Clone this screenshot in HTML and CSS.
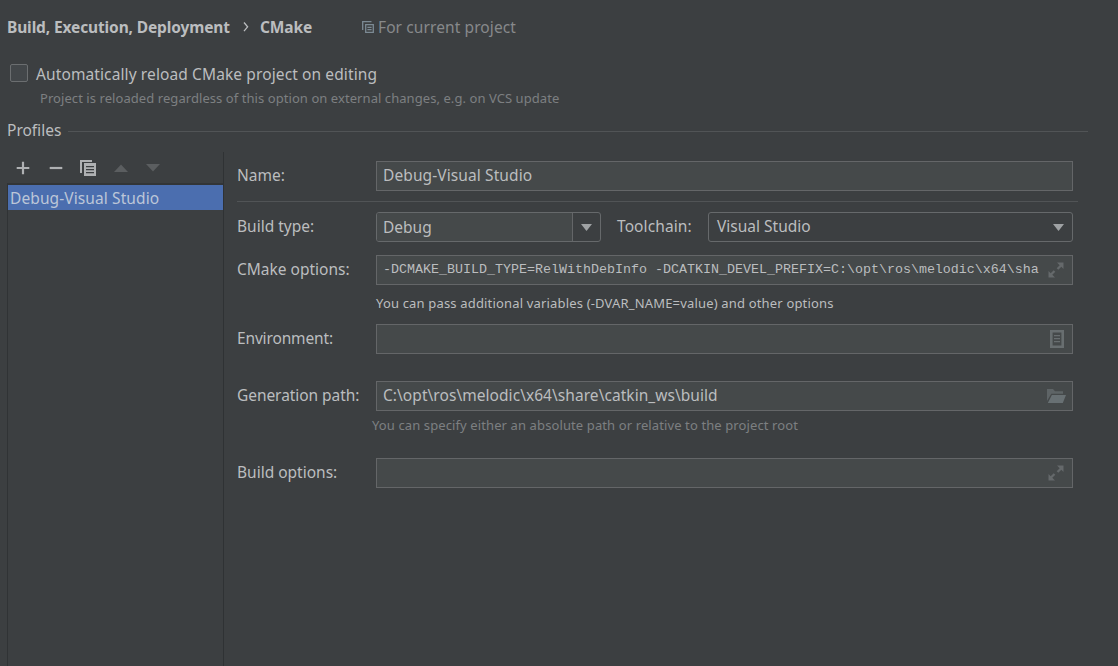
FILE: index.html
```html
<!DOCTYPE html>
<html lang="en">
<head>
<meta charset="utf-8">
<title>CMake</title>
<link rel="stylesheet" href="styles.css">
</head>
<body>
<header class="crumbs">
  <span class="crumb t-parent">Build, Execution, Deployment</span>
  <svg class="chevron" width="6" height="10" viewBox="0 0 6 10"><path d="M1 .5 4.6 4.8 1 9.1" fill="none" stroke="currentColor" stroke-width="1.3"/></svg>
  <span class="crumb t-current">CMake</span>
  <svg class="scope-icon" width="12" height="12" viewBox="0 0 12 12"><path d="M.7 9V.7H9.5M3.7 3.7h7.6v7.6H3.7zM5.4 6.4h4.2M5.4 8.6h4.2" fill="none" stroke="currentColor" stroke-width="1.3"/></svg>
  <span class="scope t-scope">For current project</span>
</header>
<label class="reload"><span class="box"></span><span class="t-reload">Automatically reload CMake project on editing</span></label>
<p class="reload-hint"><span class="t-rhint">Project is reloaded regardless of this option on external changes, e.g. on VCS update</span></p>
<div class="section"><span class="t-profiles">Profiles</span><i class="rule"></i></div>
<main class="body">
  <aside class="side">
    <div class="tools">
      <svg width="16" height="16" viewBox="0 0 16 16"><path d="M8 1.7v12.6M1.7 8h12.6" stroke="#afb1b3" stroke-width="2.2"/></svg>
      <svg width="16" height="16" viewBox="0 0 16 16"><path d="M1.7 8h12.6" stroke="#afb1b3" stroke-width="2.2"/></svg>
      <svg width="16" height="16" viewBox="0 0 16 16"><path d="M0 0h12v2H2v11H0z" fill="#afb1b3"/><path fill-rule="evenodd" d="M4 3h12v13H4zM6 6v1.2h8V6zM6 9v1.2h8V9zM6 12v1.2h8V12z" fill="#afb1b3"/></svg>
      <svg width="16" height="16" viewBox="0 0 16 16"><path d="M1 12 8 4.4 15 12z" fill="#5b5e60"/></svg>
      <svg width="16" height="16" viewBox="0 0 16 16"><path d="M1 4h14L8 11.6z" fill="#5b5e60"/></svg>
    </div>
    <div class="list"><div class="item"><span class="t-item">Debug-Visual Studio</span></div></div>
  </aside>
  <section class="form">
    <div class="row name"><span class="label t-name">Name:</span><div class="field"><span class="t-dvs">Debug-Visual Studio</span></div></div>
    <div class="row type"><span class="label t-type">Build type:</span>
      <div class="combo edit"><span class="value t-debug">Debug</span><span class="drop"><svg width="11" height="7" viewBox="0 0 11 7"><path d="M0 0h11L5.5 7z" fill="#9fa2a4"/></svg></span></div>
      <span class="mid t-tool">Toolchain:</span>
      <div class="combo pick"><span class="t-vs">Visual Studio</span><svg width="11" height="7" viewBox="0 0 11 7"><path d="M0 0h11L5.5 7z" fill="#9fa2a4"/></svg></div>
    </div>
    <div class="row opts"><span class="label t-opts">CMake options:</span><div class="field"><span class="mono">-DCMAKE_BUILD_TYPE=RelWithDebInfo -DCATKIN_DEVEL_PREFIX=C:\opt\ros\melodic\x64\sha</span>
      <svg class="expand" width="16" height="16" viewBox="0 0 16 16"><path d="M9 .5h6.5V7l-2.2-2.2-3 3-1.6-1.6 3-3zM7 15.5H.5V9l2.2 2.2 3-3 1.6 1.6-3 3z" fill="#65696b"/></svg></div></div>
    <p class="hint bright"><span class="t-pass">You can pass additional variables (-DVAR_NAME=value) and other options</span></p>
    <div class="row env"><span class="label t-env">Environment:</span><div class="field">
      <svg class="doc" width="14" height="18" viewBox="0 0 14 18"><path d="M1.3 1.3h11.4v15.4H1.3z" fill="none" stroke="#686e70" stroke-width="2.6"/><path d="M4 5.7h6M4 8.7h6M4 11.7h6" stroke="#686e70" stroke-width="1.2"/></svg></div></div>
    <div class="row gen"><span class="label t-gen">Generation path:</span><div class="field"><span class="t-path">C:\opt\ros\melodic\x64\share\catkin_ws\build</span>
      <svg class="folder" width="19" height="14" viewBox="0 0 19 14"><path d="M0 12V0h6l2 2.3h8v2.5H4.3z" fill="#5e6466"/><path d="M4.9 6H19l-3.2 8H.8z" fill="#687073"/></svg></div></div>
    <p class="hint"><span class="t-spec">You can specify either an absolute path or relative to the project root</span></p>
    <div class="row build"><span class="label t-build">Build options:</span><div class="field">
      <svg class="expand" width="16" height="16" viewBox="0 0 16 16"><path d="M9 .5h6.5V7l-2.2-2.2-3 3-1.6-1.6 3-3zM7 15.5H.5V9l2.2 2.2 3-3 1.6 1.6-3 3z" fill="#65696b"/></svg></div></div>
  </section>
</main>
</body>
</html>
```
FILE: styles.css
```css
* { box-sizing: border-box; }
body { margin: 0; height: 666px; overflow: hidden; display: flex; flex-direction: column; background: #3c3f41; color: #bbbdbf; font: 15.5px/22px "Noto Sans", "Open Sans", sans-serif; white-space: nowrap; }
p { margin: 0; }
svg { display: block; flex: none; }
.crumbs { display: flex; align-items: center; height: 22px; margin-top: 16px; padding-left: 7px; }
.crumb { font-weight: 700; letter-spacing: -.13px; }
.t-parent { width: 223px; }
.chevron { margin-left: 13px; }
.t-current { margin-left: 11px; width: 102px; }
.scope-icon { color: #7c8a94; }
.scope { color: #87898b; margin-left: 4px; letter-spacing: .1px; }
.reload { display: flex; align-items: center; height: 22px; margin-top: 25px; padding-left: 10px; }
.box { width: 18px; height: 18px; border: 1px solid #6b6e70; border-radius: 2px; background: #43474a; margin: 0 8px 2px 0; }
.t-reload { letter-spacing: .11px; }
.reload-hint { height: 20px; margin-top: 3px; padding-left: 40px; font-size: 13px; line-height: 20px; color: #7d7f81; letter-spacing: .065px; }
.section { display: flex; align-items: center; height: 22px; margin-top: 11px; padding-left: 7px; }
.t-profiles { width: 61px; }
.rule { width: 1020px; height: 1px; margin-top: 2px; background: #515456; }
.body { display: flex; flex: 1; margin-top: 11px; padding-left: 7px; }
.side { width: 217px; display: flex; flex-direction: column; border-right: 1px solid #2f3234; }
.tools { display: flex; gap: 16.6px; height: 31px; align-items: center; padding: 0 0 0 8px; }
.list { flex: 1; border-top: 2px solid #323537; border-left: 1px solid #303335; }
.item { height: 25px; background: #4b6eaf; padding-left: 2px; line-height: 26px; color: #bcc6d8; }
.t-item, .t-dvs, .t-tool { letter-spacing: .1px; }
.form { width: 854px; padding: 9px 0 0 13px; }
.row { display: flex; align-items: center; height: 30px; }
.label { width: 139px; padding-bottom: 2px; }
.field { display: flex; align-items: center; justify-content: space-between; width: 697px; height: 30px; border: 1px solid #646668; background: #45494a; padding: 0 6px; }
.field > span { margin-bottom: 2px; }
.name { height: 41px; align-items: flex-start; border-bottom: 1px solid #515456; }
.name .label { margin-top: 3px; }
.type { margin-top: 10px; }
.combo { display: flex; align-items: center; height: 30px; border: 1px solid #66696b; border-radius: 3px; }
.edit { width: 225px; }
.value { flex: 1; height: 28px; line-height: 28px; background: #45494a; padding-left: 6px; border-radius: 2px 0 0 2px; }
.drop { width: 28px; height: 28px; display: flex; align-items: center; justify-content: center; border-left: 1px solid #646668; }
.mid { width: 107px; padding: 0 0 2px 16px; }
.pick { width: 365px; margin-left: 0; justify-content: space-between; padding: 0 8px; }
.pick > span { margin-bottom: 2px; }
.opts { margin-top: 13px; }
.field > .mono { font: 13.33px/22px "Liberation Mono", monospace; margin-bottom: 1px; }
.field .doc { margin-left: auto; margin-right: 2px; }
.field .expand { margin-left: auto; margin-right: 2px; }
.hint { height: 20px; margin-top: 8px; padding-left: 139px; font-size: 13px; line-height: 20px; letter-spacing: .17px; }
.env { margin-top: 11px; }
.t-env { letter-spacing: -.15px; }
.t-gen { letter-spacing: -.06px; }
.t-path { letter-spacing: .05px; }
.gen { margin-top: 27px; }
.gen + .hint { margin-top: 4px; padding-left: 135px; color: #7d7f81; letter-spacing: .11px; }
.build { margin-top: 23px; }
```
